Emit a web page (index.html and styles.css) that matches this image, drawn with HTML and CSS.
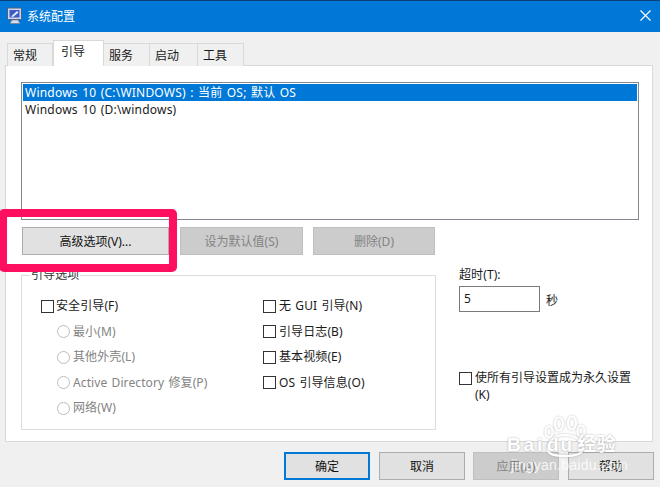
FILE: index.html
```html
<!DOCTYPE html>
<html lang="zh-CN">
<head>
<meta charset="utf-8">
<title>系统配置</title>
<link rel="stylesheet" href="styles.css">
</head>
<body>
<div class="window">
  <header class="titlebar">
    <svg class="app-icon" width="19" height="19" viewBox="0 0 19 19">
      <rect x="1.5" y="1" width="14" height="11.5" rx="1" fill="#cfd6e8" stroke="#4f5d80"/>
      <rect x="3.5" y="3" width="10" height="7.5" fill="#3c5cc4"/>
      <path d="M5 9.5 L11 4 L12.5 5.5 L7 10 Z" fill="#e4ebfb"/>
      <path d="M6 13 H12 L14 16.5 H4 Z" fill="#d8dde8" stroke="#76809a" stroke-width=".7"/>
    </svg>
    <span class="title">系统配置</span>
    <svg class="close" width="11" height="11" viewBox="0 0 11 11"><path d="M.5.5 10.5 10.5M10.5.5.5 10.5" stroke="#fff" stroke-width="1.2" fill="none"/></svg>
  </header>

  <nav class="tabs">
    <span class="tab tab-1">常规</span>
    <span class="tab tab-active">引导</span>
    <span class="tab tab-3">服务</span>
    <span class="tab tab-4">启动</span>
    <span class="tab tab-5">工具</span>
  </nav>

  <main class="panel">
    <div class="listbox">
      <div class="row row-selected">Windows 10 (C:\WINDOWS) : 当前 OS; 默认 OS</div>
      <div class="row">Windows 10 (D:\windows)</div>
    </div>

    <div class="list-actions">
      <button class="btn btn-advanced">高级选项(V)...</button>
      <button class="btn btn-off btn-default">设为默认值(S)</button>
      <button class="btn btn-off btn-delete">删除(D)</button>
    </div>

    <div class="options">
      <fieldset class="group">
        <legend class="legend">引导选项</legend>
        <div class="group-body">
          <div class="col col-left">
            <label class="opt"><span class="check"></span>安全引导(F)</label>
            <label class="opt opt-sub"><span class="radio"></span>最小(M)</label>
            <label class="opt opt-sub"><span class="radio"></span>其他外壳(L)</label>
            <label class="opt opt-sub"><span class="radio"></span>Active Directory 修复(P)</label>
            <label class="opt opt-sub"><span class="radio"></span>网络(W)</label>
          </div>
          <div class="col">
            <label class="opt"><span class="check"></span>无 GUI 引导(N)</label>
            <label class="opt"><span class="check"></span>引导日志(B)</label>
            <label class="opt"><span class="check"></span>基本视频(E)</label>
            <label class="opt"><span class="check"></span>OS 引导信息(O)</label>
          </div>
        </div>
      </fieldset>

      <aside class="side">
        <div class="timeout-label">超时(T):</div>
        <div class="timeout">
          <span class="input">5</span>
          <span class="unit">秒</span>
        </div>
        <label class="persist"><span class="check"></span><span class="persist-text">使所有引导设置成为永久设置(K)</span></label>
      </aside>
    </div>
  </main>

  <footer class="footer">
    <button class="btn btn-ok">确定</button>
    <button class="btn btn-cancel">取消</button>
    <button class="btn btn-off btn-apply">应用(A)</button>
    <button class="btn btn-help">帮助</button>
  </footer>

  <div class="highlight"></div>

  <div class="watermark">
    <svg class="paw" width="46" height="42" viewBox="0 0 46 42" fill="none" stroke="#fff" stroke-width="2.2">
      <ellipse cx="15" cy="9" rx="4" ry="6.5"/>
      <ellipse cx="28" cy="8" rx="4" ry="6.5"/>
      <ellipse cx="5" cy="17" rx="3.5" ry="5.5"/>
      <ellipse cx="37" cy="16" rx="3.5" ry="5.5"/>
      <path d="M4 33 C5 24 13 20 21 20 C30 20 39 25 39 33 C39 40 30 41 21 41 C12 41 3 40 4 33 Z"/>
    </svg>
    <div class="wm-brand"><span>Bai</span><span class="wm-du">du</span><span class="wm-cn">经验</span></div>
    <div class="wm-url">jingyan.baidu.com</div>
  </div>
</div>
</body>
</html>
```

FILE: styles.css
```css
* { box-sizing: border-box; }
html, body { margin: 0; padding: 0; }
body {
  width: 660px;
  height: 487px;
  overflow: hidden;
  background: #f0f0f0;
  color: #1a1a1a;
  font: 12px/16px "Noto Sans", "Noto Sans CJK SC", sans-serif;
  word-spacing: 1px;
  letter-spacing: .1px;
}
.window { position: relative; width: 660px; height: 487px; }

.titlebar {
  height: 32px;
  border-top: 1px solid #0a3f78;
  background: #0078d7;
  display: flex;
  align-items: center;
  padding: 0 9px 0 6px;
  color: #fff;
}
.app-icon { margin-right: 2px; }
.title { flex: 1; letter-spacing: 0; }
.close { margin-bottom: 2px; }

.tabs {
  height: 33px;
  padding: 9px 0 0 7px;
  display: flex;
  align-items: flex-end;
}
.tab {
  height: 23px;
  margin-bottom: -1px;
  background: #f0f0f0;
  border: 1px solid #d9d9d9;
  border-bottom: 0;
  border-left-width: 0;
  display: flex;
  align-items: center;
  padding: 2px 0 0 5px;
}
.tab-1 { width: 46px; border-left-width: 1px; }
.tab-3 { width: 46px; }
.tab-4 { width: 48px; }
.tab-5 { width: 46px; }
.tab-active {
  width: 51px;
  height: 26px;
  background: #fff;
  border-left-width: 1px;
  border-right-width: 1px;
  position: relative;
  z-index: 1;
  padding: 0 0 3px 7px;
}

.panel {
  width: 648px;
  height: 377px;
  margin-left: 5px;
  background: #fff;
  border: 1px solid #d9d9d9;
  padding: 16px 14px 0 15px;
}
.listbox {
  width: 618px;
  height: 138px;
  border: 1px solid #828790;
  padding: 1px;
}
.row { height: 17px; padding-left: 2px; line-height: 18px; letter-spacing: .22px; }
.row-selected { background: #0078d7; color: #fff; }

.list-actions { display: flex; margin: 7px 0 0 1px; }
.btn {
  height: 28px;
  padding: 1px 0 0;
  background: #e1e1e1;
  border: 1px solid #adadad;
  font: inherit;
  color: #111;
}
.btn-off { background: #ccc; border-color: #bfbfbf; color: #838383; }
.btn-advanced { width: 147px; margin-right: 11px; }
.btn-default { width: 123px; margin-right: 10px; }
.btn-delete { width: 122px; }

.options { display: flex; margin-top: 13px; }
.group {
  width: 415px;
  height: 162px;
  margin: 0;
  padding: 0;
  border: 1px solid #dcdcdc;
  min-inline-size: 0;
}
.group-body { display: flex; padding: 16px 0 0 19px; }
.legend { padding: 0 1px; margin-left: 8px; color: #333; line-height: 14px; }
.col { display: flex; flex-direction: column; gap: 9.6px; }
.col-left { width: 222px; }
.col-left .check { margin-right: 2px; }
.opt { display: flex; align-items: center; height: 16px; color: #1a1a1a; }
.opt-sub { color: #838383; padding-left: 16px; }
.check {
  width: 13px;
  height: 13px;
  margin-right: 3px;
  border: 1px solid #333;
  background: #fff;
  flex: none;
}
.radio {
  width: 13px;
  height: 13px;
  margin-right: 3px;
  border: 1px solid #bcbcbc;
  border-radius: 50%;
  flex: none;
}

.side { margin-left: 23px; width: 178px; }
.timeout-label { height: 14px; line-height: 14px; }
.timeout { display: flex; align-items: center; gap: 6px; margin-top: 4px; }
.input {
  width: 81px;
  height: 26px;
  border: 1px solid #7a7a7a;
  padding: 3px 4px;
  line-height: 18px;
}
.unit { padding-top: 4px; }
.persist { display: flex; margin-top: 57px; }
.persist .check { margin-top: 3px; }
.persist-text { width: 162px; line-height: 17px; word-break: break-all; letter-spacing: 0; }

.footer { display: flex; margin: 10px 0 0 284px; }
.btn-ok { width: 86px; border: 2px solid #0078d7; margin-right: 9px; }
.btn-cancel { width: 86px; margin-right: 8px; }
.btn-apply { width: 86px; margin-right: 9px; }
.btn-help { width: 86px; }

.highlight {
  position: absolute;
  left: -1px;
  top: 209px;
  width: 178px;
  height: 63px;
  border: 8px solid #ff0f5f;
  border-radius: 5px;
}

.watermark {
  position: absolute;
  left: 505px;
  top: 414px;
  width: 150px;
  height: 70px;
  color: #fff;
  word-spacing: 0;
  letter-spacing: 0;
}
.paw {
  position: absolute;
  left: 39px;
  top: 1px;
  filter: drop-shadow(0 0 1px rgba(120, 120, 120, .45));
}
.wm-brand {
  position: absolute;
  left: 2px;
  top: 17px;
  font: bold 19px/24px "Liberation Sans", sans-serif;
  white-space: nowrap;
  letter-spacing: 2.8px;
  text-shadow: 0 0 2px rgba(110, 110, 110, .6);
}
.wm-du { margin-left: 2px; letter-spacing: 2px; }
.wm-cn { margin-left: 3px; font: bold 19px/24px "Noto Sans CJK SC", sans-serif; letter-spacing: .5px; }
.wm-url {
  position: absolute;
  left: 6px;
  top: 43px;
  font: 14px/16px "Liberation Sans", sans-serif;
  letter-spacing: .25px;
  white-space: nowrap;
  color: rgba(255, 255, 255, .85);
}
```
